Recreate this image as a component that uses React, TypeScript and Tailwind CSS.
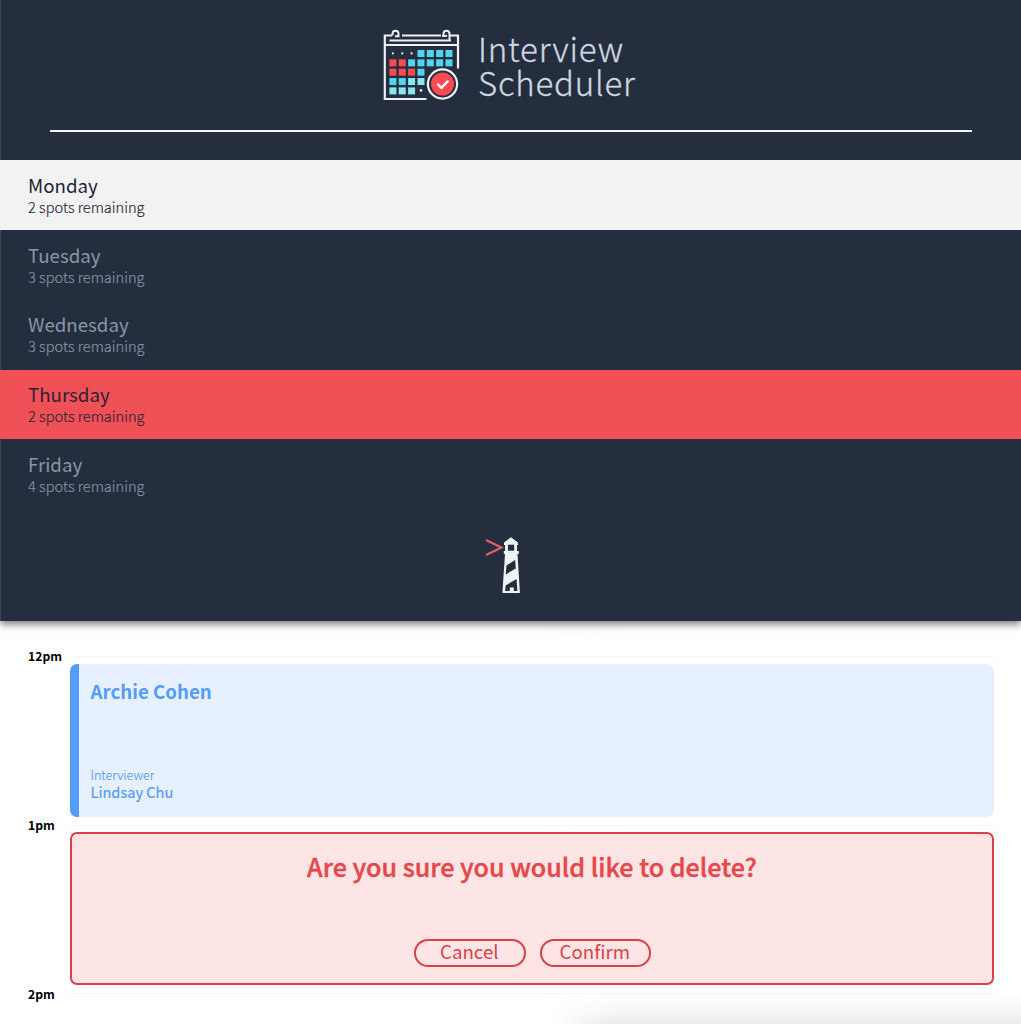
import React from 'react';

const days = [
  { name: 'Monday', spots: 2, row: 'bg-[#f2f2f2] text-[#1c2435]' },
  { name: 'Tuesday', spots: 3, row: 'text-[#8796a8]' },
  { name: 'Wednesday', spots: 3, row: 'text-[#8796a8]' },
  { name: 'Thursday', spots: 2, row: 'bg-[#f05156] text-[#2a2338]' },
  { name: 'Friday', spots: 4, row: 'text-[#8796a8]' },
];

const cells = [
  [' ', ' ', ' ', 'c', 'c', 'c', 'c'],
  ['r', 'r', 'c', 'c', 'c', 'c', 'c'],
  ['r', 'r', 'r', 'c', ' ', ' ', ' '],
  ['c', 'c', 'l', 'l', ' ', ' ', ' '],
  ['l', 'l', 'l', ' ', ' ', ' ', ' '],
];

const fills: Record<string, string> = { c: '#4fd5ee', r: '#fb4b50', l: '#86e9f0' };

function CalendarLogo() {
  return (
    <svg width="80" height="76" viewBox="0 0 80 76" fill="none">
      <g stroke="#eef1f6" strokeWidth="2.2">
        <path d="M11 7.500H3.800V71H45.500" />
        <path d="M21 7.500H60M68.500 7.500H77V40.500" />
        <path d="M3.800 17H77" />
        <path d="M8.500 12.500H70" strokeWidth="1.800" />
        <path d="M11.500 7.500V5.800a3 3 0 0 1 6 0v2.500h-3.500M62.500 8V5.800a3 3 0 0 1 6 0V12.500M66 8h-5" strokeWidth="2" />
      </g>
      {cells.map((row, y) =>
        row.map((c, x) =>
          c === ' ' ? null : (
            <rect key={`${x}-${y}`} x={8.4 + x * 9.35} y={22 + y * 9.35} width="7" height="7" fill={fills[c]} />
          ),
        ),
      )}
      <g fill="#eef1f6">
        <rect x="10.900" y="24.400" width="2" height="2" />
        <rect x="20.300" y="24.400" width="2" height="2" />
        <rect x="29.600" y="24.400" width="2" height="2" />
        <rect x="38.800" y="61.200" width="2.400" height="2.400" />
      </g>
      <circle cx="61.500" cy="56" r="17.300" fill="#242e3e" />
      <circle cx="61.500" cy="56" r="14.600" fill="#242e3e" stroke="#eef1f6" strokeWidth="2.200" />
      <circle cx="61.500" cy="56" r="11.500" fill="#fb4b50" />
      <path d="M57 56.500l3.400 3.300 6.300-6.400" stroke="#fff" strokeWidth="2.400" strokeLinecap="round" strokeLinejoin="round" />
    </svg>
  );
}

function Lighthouse() {
  return (
    <svg width="38" height="58" viewBox="0 0 38 58" fill="none">
      <path d="M1 4l15.500 7.500L1 19" stroke="#e85c63" strokeWidth="2.200" />
      <path d="M26 1.200l7 5.300V9H32v6h1.800v3h-1.300L34.800 55v2H17.500v-2l2.500-37h-1.200v-3H20V9h-1V6.500z" fill="#eef3f6" />
      <path d="M23 8.700h6.200v6H23z" fill="#242e3e" />
      <path d="M21.500 29.500l8.700-5.500.5 8.500-10 6z" fill="#242e3e" />
      <path d="M20.600 49.500l11-6.500.8 12H28.800v-3.500h-4V55h-4.600z" fill="#242e3e" />
    </svg>
  );
}

function Hour({ label, wide }: { label: string; wide?: boolean }) {
  return (
    <div className="flex h-[14px] items-center justify-between">
      <span className="text-[12.2px] font-bold leading-[14px] text-black">{label}</span>
      <span className={wide ? 'h-px w-[918px] bg-[#f3f4f6]' : 'h-px w-[924px] bg-[#f3f4f6]'} />
    </div>
  );
}

function PillButton({ children }: { children: React.ReactNode }) {
  return (
    <button className="flex h-[28px] w-[111.5px] items-center justify-center rounded-full border-2 border-[#db4049] pb-[3px] pr-px text-[18.7px] leading-none text-[#db4049]">
      {children}
    </button>
  );
}

export default function App() {
  return (
    <div className="flex h-[1024px] w-[1021px] flex-col overflow-hidden bg-white font-['Noto_Sans_CJK_SC',sans-serif]">
      <aside className="relative z-10 flex h-[620.5px] shrink-0 flex-col bg-[#242e3e] shadow-[inset_1px_0_0_#3a4858,0_3px_8px_rgba(0,0,0,0.55)]">
        <div className="flex h-[130px] shrink-0 pl-[381px] pt-[28px]">
          <CalendarLogo />
          <div className="pl-[17px] pt-[3px] text-[33px] font-light leading-[34px] tracking-[0.8px] text-[#cdd8e0] [-webkit-text-stroke:0.3px_#cdd8e0]">
            Interview
            <br />
            Scheduler
          </div>
        </div>
        <div className="mx-[50px] h-[2px] w-[922px] shrink-0 bg-[#f4f5f7]" />
        <nav className="mt-[28.3px]">
          {days.map((d) => (
            <div key={d.name} className={`h-[69.75px] ${d.row} pl-[28px] pt-[12.5px]`}>
              <div className="text-[18.7px] leading-[24px]">{d.name}</div>
              <div className="text-[14.6px] font-light leading-[19px] [-webkit-text-stroke:0.15px]">
                {d.spots} spots remaining
              </div>
            </div>
          ))}
        </nav>
        <div className="pl-[485px] pt-[27px]">
          <Lighthouse />
        </div>
      </aside>
      <main className="flex grow flex-col bg-[linear-gradient(to_right,#fff_550px,transparent_620px),linear-gradient(to_bottom,#fff_calc(100%_-_32px),#f7f7f7_calc(100%_-_14px),#eaeaea_100%)] pl-[28px] pr-[27px] pt-[28.5px]">
        <Hour label="12pm" wide />
        <article className="ml-[42px] mt-[0.5px] flex h-[153px] w-[924px] flex-col justify-between rounded-[7px] border-l-[9px] border-[#539cf9] bg-[#e6f0ff] pb-[17px] pl-[11.5px] pt-[15px] text-[#539cf9]">
          <h2 className="text-[18.7px] font-bold leading-[24px]">Archie Cohen</h2>
          <div>
            <div className="text-[12.5px] font-light leading-[16px] [-webkit-text-stroke:0.15px]">Interviewer</div>
            <div className="text-[14.6px] leading-[17px] [-webkit-text-stroke:0.2px]">Lindsay Chu</div>
          </div>
        </article>
        <div className="h-[1.5px]" />
        <Hour label="1pm" />
        <article className="ml-[42px] flex h-[153px] w-[924px] flex-col items-center justify-between rounded-[7px] border-2 border-[#db4049] bg-[#fee5e5] pb-[16px] pt-[15px]">
          <h1 className="text-[25.1px] font-medium leading-[34px] text-[#e5474b] [-webkit-text-stroke:0.4px_#e5474b]">
            Are you sure you would like to delete?
          </h1>
          <div className="flex gap-[14px] pl-px">
            <PillButton>Cancel</PillButton>
            <PillButton>Confirm</PillButton>
          </div>
        </article>
        <div className="h-[1.5px]" />
        <Hour label="2pm" />
      </main>
    </div>
  );
}
